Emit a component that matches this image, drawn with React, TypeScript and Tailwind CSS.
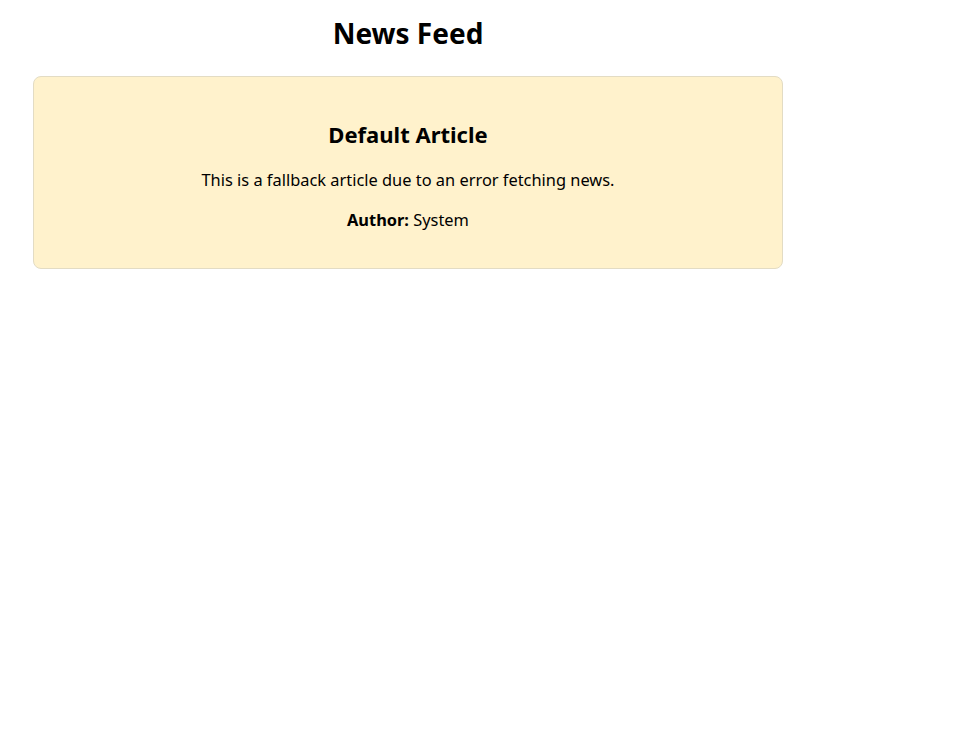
export default function App() {
  return (
    <div className="min-h-screen bg-white px-[33px] pt-[14px] font-['Noto_Sans',sans-serif] text-black">
      <div className="w-[750px]">
        <h1 className="text-center text-[28px] font-bold leading-[38px]">News Feed</h1>
        <div className="mt-[24px] rounded-lg border border-[#e3dcc4] bg-[#fff2cc] px-6 pb-[36px] pt-[42px] text-center">
          <h2 className="text-[22px] font-bold leading-[30px]">Default Article</h2>
          <p className="mt-[19px] text-[16.4px] leading-[24px]">
            This is a fallback article due to an error fetching news.
          </p>
          <p className="mt-[16px] text-[16.4px] leading-[24px]">
            <strong>Author:</strong> System
          </p>
        </div>
      </div>
    </div>
  )
}
